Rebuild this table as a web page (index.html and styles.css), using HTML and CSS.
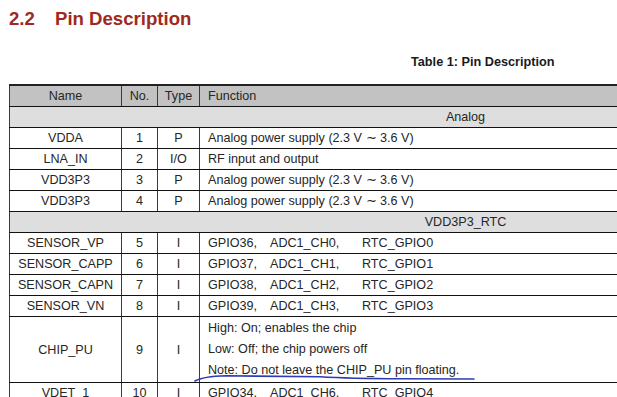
FILE: index.html
```html
<!DOCTYPE html>
<html>
<head>
<meta charset="utf-8">
<link rel="stylesheet" href="styles.css">
</head>
<body>
<div class="page">
  <h2 class="heading"><span class="num">2.2</span><span>Pin Description</span></h2>
  <div class="caption">Table 1: Pin Description</div>
  <table class="pins">
    <colgroup>
      <col class="c-name"><col class="c-no"><col class="c-type"><col class="c-func">
    </colgroup>
    <thead>
      <tr class="head"><th>Name</th><th>No.</th><th>Type</th><th class="left">Function</th></tr>
    </thead>
    <tbody>
      <tr class="section"><td colspan="4">Analog</td></tr>
      <tr><td>VDDA</td><td>1</td><td>P</td><td class="left">Analog power supply (2.3 V ∼ 3.6 V)</td></tr>
      <tr><td>LNA_IN</td><td>2</td><td>I/O</td><td class="left">RF input and output</td></tr>
      <tr><td>VDD3P3</td><td>3</td><td>P</td><td class="left">Analog power supply (2.3 V ∼ 3.6 V)</td></tr>
      <tr><td>VDD3P3</td><td>4</td><td>P</td><td class="left">Analog power supply (2.3 V ∼ 3.6 V)</td></tr>
      <tr class="section"><td colspan="4">VDD3P3_RTC</td></tr>
      <tr><td>SENSOR_VP</td><td>5</td><td>I</td><td class="left"><span class="f1">GPIO36,</span><span class="f2">ADC1_CH0,</span><span>RTC_GPIO0</span></td></tr>
      <tr><td>SENSOR_CAPP</td><td>6</td><td>I</td><td class="left"><span class="f1">GPIO37,</span><span class="f2">ADC1_CH1,</span><span>RTC_GPIO1</span></td></tr>
      <tr><td>SENSOR_CAPN</td><td>7</td><td>I</td><td class="left"><span class="f1">GPIO38,</span><span class="f2">ADC1_CH2,</span><span>RTC_GPIO2</span></td></tr>
      <tr><td>SENSOR_VN</td><td>8</td><td>I</td><td class="left"><span class="f1">GPIO39,</span><span class="f2">ADC1_CH3,</span><span>RTC_GPIO3</span></td></tr>
      <tr class="tall"><td>CHIP_PU</td><td>9</td><td>I</td><td class="left">
        <div class="line">High: On; enables the chip</div>
        <div class="line">Low: Off; the chip powers off</div>
        <div class="line">Note: Do not leave the CHIP_PU pin floating.</div>
      </td></tr>
      <tr><td>VDET_1</td><td>10</td><td>I</td><td class="left"><span class="f1">GPIO34,</span><span class="f2">ADC1_CH6,</span><span>RTC_GPIO4</span></td></tr>
    </tbody>
  </table>
  <svg class="ink" width="617" height="397" viewBox="0 0 617 397">
    <path d="M195 381 Q203 376.5 226 375.8 L320 376.8 Q350 378.6 400 378.8 L474 379" fill="none" stroke="#2b3cb4" stroke-width="1.6" stroke-linecap="round"/>
  </svg>
</div>
</body>
</html>
```
FILE: styles.css
```css
html, body {
  margin: 0;
  padding: 0;
  overflow: hidden;
  background: #ffffff;
}
.page {
  position: relative;
  width: 617px;
  height: 397px;
  font-family: "Liberation Sans", Arial, sans-serif;
  color: #262626;
}
.heading {
  margin: 0;
  padding: 7px 0 0 9px;
  height: 30px;
  box-sizing: border-box;
  font-size: 18.6px;
  font-weight: bold;
  color: #a0291d;
  line-height: 24px;
  display: flex;
}
.heading .num {
  width: 46px;
}
.caption {
  margin: 24px 0 0 411px;
  font-size: 12.7px;
  font-weight: bold;
  color: #1a1a1a;
  line-height: 16px;
  height: 30px;
}
.pins {
  margin-left: 9px;
  width: 913px;
  border-collapse: collapse;
  table-layout: fixed;
  font-size: 12.6px;
}
.c-name { width: 112px; }
.c-no { width: 36px; }
.c-type { width: 42px; }
.pins th, .pins td {
  border-left: 1px solid #3a3a3a;
  border-right: 1px solid #3a3a3a;
  border-top: 1px solid #111;
  border-bottom: 1px solid #111;
  padding: 0;
  height: 20px;
  line-height: 20px;
  text-align: center;
  font-weight: normal;
  white-space: nowrap;
}
.pins thead th {
  border-top: 2px solid #222;
  background: #c2c2c2;
  height: 20px;
}
.pins .left {
  text-align: left;
  padding-left: 8px;
}
.section td {
  background: #dedede;
  height: 20px;
}
.f1 {
  display: inline-block;
  width: 62px;
}
.f2 {
  display: inline-block;
  width: 92px;
}
.tall td {
  height: 65px;
}
.tall .line {
  height: 21px;
  line-height: 21px;
}
.ink {
  position: absolute;
  left: 0;
  top: 0;
  pointer-events: none;
}
```
